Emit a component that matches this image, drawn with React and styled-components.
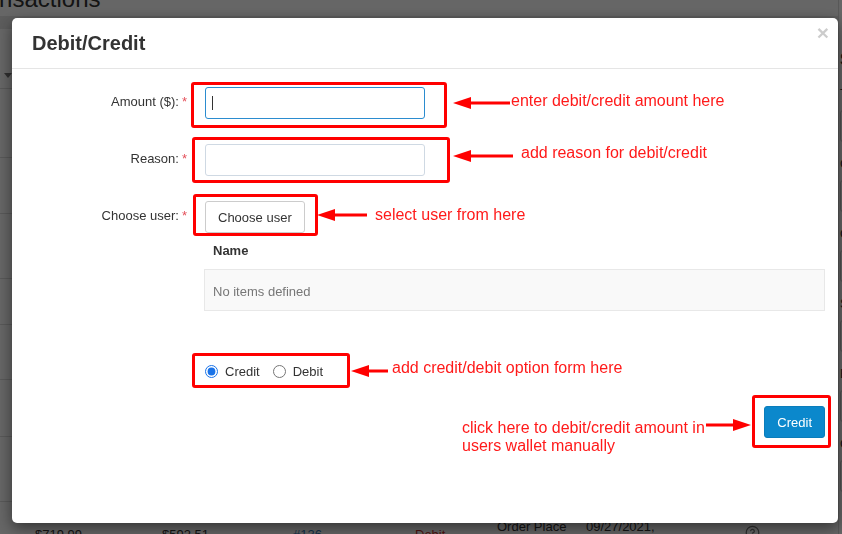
import React from "react";
import styled, { createGlobalStyle } from "styled-components";
import { CircleHelp } from "lucide-react";

const GlobalStyle = createGlobalStyle`
  html, body {
    margin: 0;
    padding: 0;
    width: 842px;
    height: 534px;
    overflow: hidden;
    background: #fff;
    font-family: "Liberation Sans", Arial, sans-serif;
  }
  * {
    box-sizing: border-box;
  }
`;

/* ---------- page behind the dialog ---------- */

const Page = styled.div`
  height: 534px;
  overflow: hidden;
  display: flex;
  color: #333;
  font-size: 13px;
`;

const MainCol = styled.div`
  width: 838px;
  flex: none;
  overflow: hidden;
`;

const SideCol = styled.div`
  flex: 1;
  padding: 50px 0 0 1px;
  border-left: 1px solid #ddd;
  white-space: nowrap;
`;

const SideHeading = styled.div`
  height: 20px;
  margin-bottom: 16px;
  font-size: 16px;
  font-weight: bold;
  line-height: 20px;
`;

const SideLabel = styled.div`
  line-height: 16px;
  margin-bottom: 8px;
`;

const SideInput = styled.div`
  width: 160px;
  height: 32px;
  margin-bottom: 14px;
  border: 1px solid #ccc;
  border-radius: 3px;
`;

const PageTitle = styled.h1`
  margin: -13px 0 0 -36px;
  font-size: 24px;
  line-height: 24px;
  font-weight: normal;
  color: #333;
  white-space: nowrap;
`;

const FilterBand = styled.div`
  margin-top: 5px;
  height: 13px;
  background: #e6e6e6;
`;

const FilterRow = styled.div`
  height: 59px;
  padding-top: 34px;
  line-height: 16px;
  display: flex;
  align-items: center;
`;

const ActionLink = styled.span`
  margin-left: -36px;
  color: #337ab7;
  display: inline-flex;
  align-items: center;
`;

const DropCaret = styled.i`
  margin-left: 4px;
  border-top: 5px solid #777;
  border-left: 4px solid transparent;
  border-right: 4px solid transparent;
`;

const BgRow = styled.div`
  height: ${(p) => p.$h}px;
  border-top: 1px solid #ddd;
`;

const BgRecord = styled.div`
  height: 66px;
  border-top: 1px solid #ddd;
  display: grid;
  grid-template-columns: 127px 131px 122px 82px 89px 159px auto;
  padding-left: 35px;
  align-items: center;
  line-height: 16px;
  white-space: nowrap;
`;

const BgCell = styled.div`
  color: ${(p) => p.$color || "#333"};
`;

/* ---------- dialog ---------- */

const Backdrop = styled.div`
  position: fixed;
  inset: 0;
  background: rgba(0, 0, 0, 0.6);
`;

const Modal = styled.div`
  position: fixed;
  left: 12px;
  top: 18px;
  width: 826px;
  height: 505px;
  background: #fff;
  border-radius: 5px;
  box-shadow: 0 5px 15px rgba(0, 0, 0, 0.5);
  display: flex;
  flex-direction: column;
  overflow: hidden;
`;

const ModalHeader = styled.div`
  height: 51px;
  padding: 0 9px 0 20px;
  border-bottom: 1px solid #e5e5e5;
  display: flex;
  align-items: center;
  justify-content: space-between;
`;

const ModalTitle = styled.h4`
  margin: 0;
  font-size: 20px;
  font-weight: bold;
  color: #333;
`;

const CloseButton = styled.button`
  align-self: flex-start;
  margin-top: 4px;
  padding: 0;
  border: 0;
  background: none;
  font-family: "Liberation Sans", Arial, sans-serif;
  font-size: 21px;
  font-weight: bold;
  line-height: 21px;
  color: #000;
  opacity: 0.2;
`;

const ModalBody = styled.div`
  padding: 18px 13px 0 0;
  display: flex;
  flex-direction: column;
`;

const FormRow = styled.div`
  display: grid;
  grid-template-columns: 175px 1fr;
  column-gap: 18px;
  align-items: start;
  margin-bottom: ${(p) => (p.$last ? 0 : 25)}px;
`;

const FieldLabel = styled.label`
  text-align: right;
  font-size: 13px;
  line-height: 30px;
  color: #333;
  white-space: nowrap;
`;

const Required = styled.span`
  margin-left: 3px;
  color: #e4505a;
`;

const InputWrap = styled.div`
  position: relative;
  width: 220px;
`;

const TextInput = styled.input`
  display: block;
  width: 220px;
  height: 32px;
  padding: 0 7px;
  border: 1px solid ${(p) => (p.$focused ? "#2b8ccf" : "#cfd9e3")};
  border-radius: 3px;
  font-family: inherit;
  font-size: 13px;
  outline: none;
`;

const TextCaret = styled.span`
  position: absolute;
  left: 7px;
  top: 9px;
  width: 1px;
  height: 14px;
  background: #333;
`;

const DefaultButton = styled.button`
  height: 32px;
  padding: 0 12px;
  border: 1px solid #ccc;
  border-radius: 3px;
  background: #fff;
  font-family: inherit;
  font-size: 13px;
  color: #333;
`;

const ItemsTable = styled.div`
  margin-left: -1px;
`;

const ItemsHead = styled.div`
  padding: 9px 8px 9px 9px;
  font-size: 13px;
  font-weight: bold;
  line-height: 18px;
  color: #333;
`;

const EmptyRow = styled.div`
  height: 42px;
  padding: 4px 8px 0;
  border: 1px solid #e8e8e8;
  background: #f9f9f9;
  font-size: 13px;
  line-height: 36px;
  color: #777;
`;

const RadioRow = styled.div`
  margin: 51px 0 0 193px;
  height: 18px;
  display: flex;
  align-items: center;
  gap: 13px;
`;

const RadioLabel = styled.label`
  display: inline-flex;
  align-items: center;
  gap: 7px;
  font-size: 13px;
  color: #333;
`;

const Radio = styled.input`
  margin: 0;
  width: 13px;
  height: 13px;
  accent-color: #1a73e8;
`;

const Footer = styled.div`
  margin-top: 26px;
  display: flex;
  justify-content: flex-end;
`;

const PrimaryButton = styled.button`
  height: 32px;
  padding: 0 12px;
  border: 1px solid #0a7dbb;
  border-radius: 3px;
  background: #0b88cc;
  font-family: inherit;
  font-size: 13px;
  color: #fff;
`;

/* ---------- annotations drawn over the screenshot ---------- */

const Annotations = styled.div`
  position: fixed;
  inset: 0;
  pointer-events: none;
`;

const Mark = styled.div`
  position: absolute;
  left: ${(p) => p.$x}px;
  top: ${(p) => p.$y}px;
  width: ${(p) => p.$w}px;
  height: ${(p) => p.$h}px;
  border: 3px solid #ff0000;
  border-radius: 3px;
`;

const Note = styled.div`
  position: absolute;
  left: ${(p) => p.$x}px;
  top: ${(p) => p.$y}px;
  font-size: 16px;
  line-height: 18px;
  color: #ff1a1a;
  white-space: nowrap;
`;

const ArrowSvg = styled.svg`
  position: absolute;
  left: ${(p) => p.$x}px;
  top: ${(p) => p.$y - 7}px;
  overflow: visible;
`;

function Arrow({ from, to, y }) {
  const left = Math.min(from, to);
  const len = Math.abs(to - from);
  const pointsLeft = to < from;
  return (
    <ArrowSvg $x={left} $y={y} width={len} height={14} viewBox={`0 0 ${len} 14`}>
      {pointsLeft ? (
        <>
          <polygon points="0,7 18,1 18,13" fill="#ff0000" />
          <rect x={16} y={5.5} width={len - 16} height={3} fill="#ff0000" />
        </>
      ) : (
        <>
          <polygon points={`${len},7 ${len - 18},1 ${len - 18},13`} fill="#ff0000" />
          <rect x={0} y={5.5} width={len - 16} height={3} fill="#ff0000" />
        </>
      )}
    </ArrowSvg>
  );
}

const marks = [
  { x: 191, y: 82, w: 256, h: 46 },
  { x: 192, y: 137, w: 258, h: 46 },
  { x: 193, y: 194, w: 125, h: 42 },
  { x: 192, y: 353, w: 158, h: 35 },
  { x: 752, y: 395, w: 79, h: 53 },
];

const arrows = [
  { from: 510, to: 453, y: 103 },
  { from: 513, to: 453, y: 156 },
  { from: 367, to: 317, y: 215 },
  { from: 388, to: 351, y: 371 },
  { from: 706, to: 751, y: 425 },
];

const notes = [
  { x: 511, y: 92, text: "enter debit/credit amount here" },
  { x: 521, y: 144, text: "add reason for debit/credit" },
  { x: 375, y: 206, text: "select user from here" },
  { x: 392, y: 359, text: "add credit/debit option form here" },
];

const sideFields = ["Type", "Customer", "Order", "Status", "End date", "Category"];

export default function App() {
  return (
    <>
      <GlobalStyle />
      <Page>
        <MainCol>
          <PageTitle>Transactions</PageTitle>
          <FilterBand />
          <FilterRow>
            <ActionLink>
              Action
              <DropCaret />
            </ActionLink>
          </FilterRow>
          {[69, 56, 65, 46, 55, 57, 65].map((h, i) => (
            <BgRow key={i} $h={h} />
          ))}
          <BgRecord>
            <BgCell>$719.99</BgCell>
            <BgCell>$592.51</BgCell>
            <BgCell $color="#337ab7">#136</BgCell>
            <BgCell $color="#c9302c">Debit</BgCell>
            <BgCell>
              Order Place
              <br />
              Wallet
            </BgCell>
            <BgCell>
              09/27/2021,
              <br />
              10:15 AM
            </BgCell>
            <BgCell $color="#777">
              <CircleHelp size={15} />
            </BgCell>
          </BgRecord>
        </MainCol>
        <SideCol>
          <SideHeading>Search</SideHeading>
          {sideFields.map((f) => (
            <div key={f}>
              <SideLabel>{f}</SideLabel>
              <SideInput />
            </div>
          ))}
        </SideCol>
      </Page>

      <Backdrop />

      <Modal>
        <ModalHeader>
          <ModalTitle>Debit/Credit</ModalTitle>
          <CloseButton>×</CloseButton>
        </ModalHeader>
        <ModalBody>
          <FormRow>
            <FieldLabel>
              Amount ($):<Required>*</Required>
            </FieldLabel>
            <InputWrap>
              <TextInput $focused />
              <TextCaret />
            </InputWrap>
          </FormRow>
          <FormRow>
            <FieldLabel>
              Reason:<Required>*</Required>
            </FieldLabel>
            <InputWrap>
              <TextInput />
            </InputWrap>
          </FormRow>
          <FormRow $last>
            <FieldLabel>
              Choose user:<Required>*</Required>
            </FieldLabel>
            <div>
              <DefaultButton>Choose user</DefaultButton>
              <ItemsTable>
                <ItemsHead>Name</ItemsHead>
                <EmptyRow>No items defined</EmptyRow>
              </ItemsTable>
            </div>
          </FormRow>
          <RadioRow>
            <RadioLabel>
              <Radio type="radio" name="kind" defaultChecked />
              Credit
            </RadioLabel>
            <RadioLabel>
              <Radio type="radio" name="kind" />
              Debit
            </RadioLabel>
          </RadioRow>
          <Footer>
            <PrimaryButton>Credit</PrimaryButton>
          </Footer>
        </ModalBody>
      </Modal>

      <Annotations>
        {marks.map((m, i) => (
          <Mark key={i} $x={m.x} $y={m.y} $w={m.w} $h={m.h} />
        ))}
        {arrows.map((a, i) => (
          <Arrow key={i} {...a} />
        ))}
        {notes.map((n, i) => (
          <Note key={i} $x={n.x} $y={n.y}>
            {n.text}
          </Note>
        ))}
        <Note $x={462} $y={419}>
          click here to debit/credit amount in
          <br />
          users wallet manually
        </Note>
      </Annotations>
    </>
  );
}
